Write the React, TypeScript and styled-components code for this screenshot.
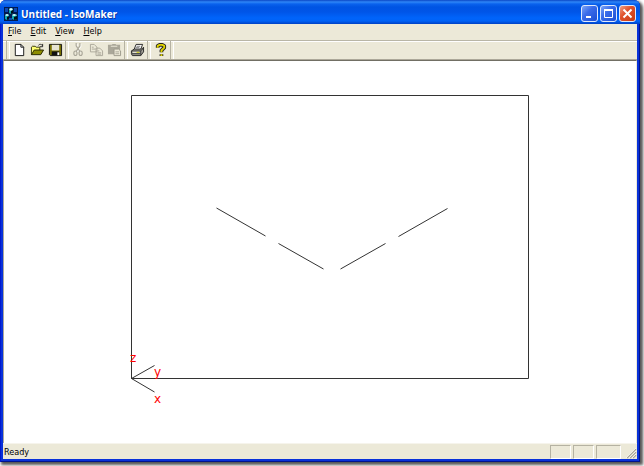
import React from "react";
import styled, { createGlobalStyle } from "styled-components";

const GlobalStyle = createGlobalStyle`
  * { box-sizing: border-box; }
  html, body { margin: 0; height: 100%; background: #fff; }
  #root { height: 100%; }
  body { font-family: "DejaVu Sans Condensed", "DejaVu Sans", sans-serif; font-size: 9px; color: #000; overflow: hidden; }
`;

const Desktop = styled.div`
  height: 100vh;
  padding: 0 4px 4px 0;
`;

const AppWindow = styled.main`
  height: 100%;
  display: flex;
  flex-direction: column;
  padding: 0 3px 3px;
  background: #0831d9;
  border-radius: 6px 6px 0 0;
  box-shadow: inset 1px 0 #0019cf, inset -1px -1px #00138c, 2px 2px 3px 1px #555;
`;

const TitleBar = styled.header`
  flex: none;
  height: 24px;
  margin: 0 -3px;
  padding: 3px 4px 0;
  display: flex;
  align-items: center;
  gap: 3px;
  border-radius: 6px 6px 0 0;
  background: linear-gradient(#0b47c5 0, #2f86f7 2px, #0a62ed 4px, #0054e3 7px, #0055e8 12px, #0064fb 18px, #0062f6 21px, #0040c4 24px);
`;

const Title = styled.h1`
  flex: 1;
  margin: 0;
  color: #fff;
  font: 700 10px/16px "Open Sans", sans-serif;
  text-shadow: 1px 1px #0b3aa4;
`;

const Captions = styled.div`
  display: flex;
  gap: 2px;
`;

const CaptionButton = styled.button<{ $close?: boolean }>`
  width: 17px;
  height: 17px;
  padding: 0;
  display: grid;
  place-items: center;
  border: 1px solid #dfe9fc;
  border-radius: 3px;
  background: ${(p) =>
    p.$close
      ? "linear-gradient(135deg, #f0a084, #e0522c 40%, #c83a12)"
      : "linear-gradient(135deg, #7ea6f6, #3a6cea 40%, #1c4fd4)"};
`;

const MenuBar = styled.nav`
  flex: none;
  height: 16px;
  display: flex;
  align-items: flex-start;
  gap: 9px;
  padding: 0 5px;
  background: #ece9d8;
`;

const MenuItem = styled.button`
  padding: 0;
  border: 0;
  background: none;
  color: #000;
  font: inherit;
  line-height: 14px;
  &::first-letter { text-decoration: underline; }
`;

const ToolBar = styled.div`
  flex: none;
  height: 20px;
  display: flex;
  align-items: center;
  padding-left: 3px;
  border-top: 1px solid #b9b6a6;
  border-bottom: 1px solid #aca899;
  box-shadow: inset 0 1px #fff;
  background: #ece9d8;
`;

const Divider = styled.span<{ $edge?: boolean }>`
  width: ${(p) => (p.$edge ? "4px" : "5px")};
  height: 18px;
  display: flex;
  justify-content: ${(p) => (p.$edge ? "flex-start" : "center")};
  &::before {
    content: "";
    width: 2px;
    border-left: 1px solid #b5b2a2;
    border-right: 1px solid #fff;
  }
`;

const ToolButton = styled.button`
  width: 18px;
  height: 18px;
  padding: 0;
  display: grid;
  place-items: center;
  border: 0;
  background: none;
`;

const View = styled.section`
  flex: 1;
  min-height: 0;
  display: flex;
  background: #fff;
  border-top: 1px solid #716f64;
  border-left: 1px solid #aca899;
  border-right: 1px solid #ece9d8;
`;

const Drawing = styled.svg`
  width: 100%;
  height: 100%;
  display: block;
  fill: none;
  stroke: #333;
  stroke-width: 1;
`;

const AxisLabel = styled.text`
  fill: #f00;
  stroke: none;
  font: 12px "DejaVu Sans", sans-serif;
`;

const StatusBar = styled.footer`
  flex: none;
  height: 16px;
  display: flex;
  align-items: flex-end;
  gap: 2px;
  padding-left: 1px;
  border-top: 1px solid #f6f4ec;
  background: #ece9d8;
`;

const Status = styled.span`
  flex: 1;
  line-height: 14px;
`;

const Pane = styled.span<{ $wide?: boolean }>`
  width: ${(p) => (p.$wide ? "25px" : "21px")};
  height: 14px;
  border: 1px solid;
  border-color: #b5b2a2 #fff #fff #b5b2a2;
`;

const Grip = styled.svg`
  display: block;
`;

const Icon = ({ children }: { children: React.ReactNode }) => (
  <svg width="15" height="14" viewBox="0 0 16 15" aria-hidden="true">{children}</svg>
);

const AppIcon = () => (
  <svg width="14" height="14" viewBox="0 0 14 14" aria-hidden="true">
    <path fill="#001a50" d="M0 0h14v14H0z" />
    <path fill="#0c48b0" d="M1 1h3v4H1zM10 1h3v4h-3zM5 11h3v2H5z" />
    <path fill="#10a8b0" d="M5 2l2-1 2 1v4L7 7 5 6zM1 8l2-1 2 1v4l-2 1-2-1zM8 8l2-1 3 1v4l-3 1-2-1z" />
    <path fill="#e8ffff" d="M5 2l2-1 2 1-2 2zM1 8l2-1 2 1-2 1zM8 8l2-1 3 1-3 1z" />
    <path fill="#001018" d="M7 4l2-1v3L7 7zM3 10l2-1v3l-2 1zM10 10l3-1v3l-3 1z" />
  </svg>
);

const NewIcon = () => (
  <Icon><path d="M3.5 1.5h6l3 3v9h-9z" fill="#fff" stroke="#111" /><path d="M9.5 1.5v3h3" fill="none" stroke="#111" /></Icon>
);

const OpenIcon = () => (
  <Icon>
    <path d="M1.5 12.5v-8l1-1h3l1 1h4v3" fill="#ffff70" stroke="#333300" />
    <path d="M1.5 12.5l3-5h10l-3 5z" fill="#8d8d00" stroke="#222200" />
    <path d="M9 2.5c1-1.5 3-1.5 4.5.5m0-2v3h-3" fill="none" stroke="#222" />
  </Icon>
);

const SaveIcon = () => (
  <Icon>
    <path d="M1.5 1.5h13v12h-12l-1-1z" fill="#777000" stroke="#111" />
    <path d="M4 2h8v6H4z" fill="#e7e4d2" />
    <path d="M4 9h8v4H4z" fill="#111" />
    <path d="M10 10h2v3h-2z" fill="#fff" />
  </Icon>
);

const CutIcon = () => (
  <Icon>
    <g fill="none" stroke="#fff" transform="translate(1 1)"><path d="M5.5 0v3l4 6M9.5 0v3l-4 6" /></g>
    <g fill="none" stroke="#aaa799" strokeWidth="1.2">
      <path d="M5.5 0v3l4 6M9.5 0v3l-4 6" />
      <ellipse cx="4.7" cy="11" rx="1.7" ry="2.4" /><ellipse cx="10.3" cy="11" rx="1.7" ry="2.4" />
    </g>
  </Icon>
);

const CopyIcon = () => (
  <Icon>
    <g fill="#ece9d8" stroke="#aaa799">
      <path d="M1.5 1.5h4l3 3v5h-7zM7.5 5.5h4l3 3v5h-7z" />
      <path d="M3 4.5h2M3 6.5h4M9 8.5h2M9 10.5h4M9 12h4" />
    </g>
  </Icon>
);

const PasteIcon = () => (
  <Icon>
    <path d="M1 2h4l1-1h3l1 1h4v10H1z" fill="#aaa799" />
    <path d="M4 3.5h7" stroke="#ece9d8" />
    <path d="M7.5 6.5h5l2 2v5h-7z" fill="#ece9d8" stroke="#9c998b" />
    <path d="M9 9.5h4M9 11.5h4" stroke="#aaa799" />
  </Icon>
);

const PrintIcon = () => (
  <Icon>
    <path d="M4.500 6.500l2-5h7l-2 5" fill="#fff" stroke="#222" />
    <path d="M7 3.5h4M6 5h4" stroke="#777" />
    <path d="M1.5 8.5l3-2h8l2-2v5l-3 4h-9l-1-2z" fill="#a5a399" stroke="#222" />
    <path d="M1.5 8.5h10l3-3M11.5 8.5v5M2 11.5h9" fill="none" stroke="#333" />
    <path d="M3 10h7" stroke="#f4f2e4" /><path d="M7 10h3" stroke="#cccc00" />
  </Icon>
);

const HelpIcon = () => (
  <Icon>
    <g fill="none" strokeLinejoin="round">
      <path d="M5 5V3l2-1h3l2 1v2L9 8v2M9 12v2" stroke="#222" strokeWidth="4" />
      <path d="M5 5V3l2-1h3l2 1v2L9 8v2M9 12v2" stroke="#e0d400" strokeWidth="2" />
    </g>
  </Icon>
);

const menus = ["File", "Edit", "View", "Help"];

const toolGroups = [
  [{ label: "New", Glyph: NewIcon }, { label: "Open", Glyph: OpenIcon }, { label: "Save", Glyph: SaveIcon }],
  [
    { label: "Cut", Glyph: CutIcon, disabled: true },
    { label: "Copy", Glyph: CopyIcon, disabled: true },
    { label: "Paste", Glyph: PasteIcon, disabled: true },
  ],
  [{ label: "Print", Glyph: PrintIcon }],
  [{ label: "About", Glyph: HelpIcon }],
] as { label: string; Glyph: () => React.JSX.Element; disabled?: boolean }[][];

export default function App() {
  return (
    <Desktop>
      <GlobalStyle />
      <AppWindow>
        <TitleBar>
          <AppIcon />
          <Title>Untitled - IsoMaker</Title>
          <Captions>
            <CaptionButton aria-label="Minimize">
              <svg width="13" height="13" viewBox="0 0 13 13"><path d="M3 9h5v2H3z" fill="#fff" /></svg>
            </CaptionButton>
            <CaptionButton aria-label="Maximize">
              <svg width="13" height="13" viewBox="0 0 13 13">
                <path d="M2.5 3.5h8v7h-8z" fill="none" stroke="#fff" /><path d="M2 2h9v2H2z" fill="#fff" />
              </svg>
            </CaptionButton>
            <CaptionButton $close aria-label="Close">
              <svg width="13" height="13" viewBox="0 0 13 13"><path d="M2.5 2.5l8 8m0-8l-8 8" stroke="#fff" strokeWidth="2" /></svg>
            </CaptionButton>
          </Captions>
        </TitleBar>
        <MenuBar aria-label="Menu">
          {menus.map((name) => <MenuItem key={name}>{name}</MenuItem>)}
        </MenuBar>
        <ToolBar role="toolbar" aria-label="Standard">
          <Divider $edge />
          {toolGroups.map((group) => (
            <React.Fragment key={group[0].label}>
              {group.map(({ label, Glyph, disabled }) => (
                <ToolButton key={label} aria-label={label} disabled={disabled}><Glyph /></ToolButton>
              ))}
              <Divider />
            </React.Fragment>
          ))}
        </ToolBar>
        <View>
          <Drawing viewBox="4 61 632 382" role="img" aria-label="Isometric drawing">
            <path d="M131.5 95.5h397v283h-397z" />
            <path d="M216.5 208l49 28M278.5 243.5l45 25.5M340.5 269l45-25.5M398.5 236.5l49-28" />
            <path d="M131.5 378.5l23-13M131.5 378.5l23 13.5" />
            <AxisLabel x="130" y="362">z</AxisLabel>
            <AxisLabel x="154" y="376">y</AxisLabel>
            <AxisLabel x="154" y="403">x</AxisLabel>
          </Drawing>
        </View>
        <StatusBar>
          <Status>Ready</Status>
          <Pane /><Pane /><Pane $wide />
          <Grip width="14" height="14" viewBox="0 0 14 14" aria-hidden="true">
            <path d="M4 13l9-9M7 13l6-6M10 13l3-3" stroke="#aaa799" strokeWidth="1.5" />
            <path d="M3 13L13 3M6 13l7-7M9 13l4-4" stroke="#fff" strokeWidth=".7" />
          </Grip>
        </StatusBar>
      </AppWindow>
    </Desktop>
  );
}
